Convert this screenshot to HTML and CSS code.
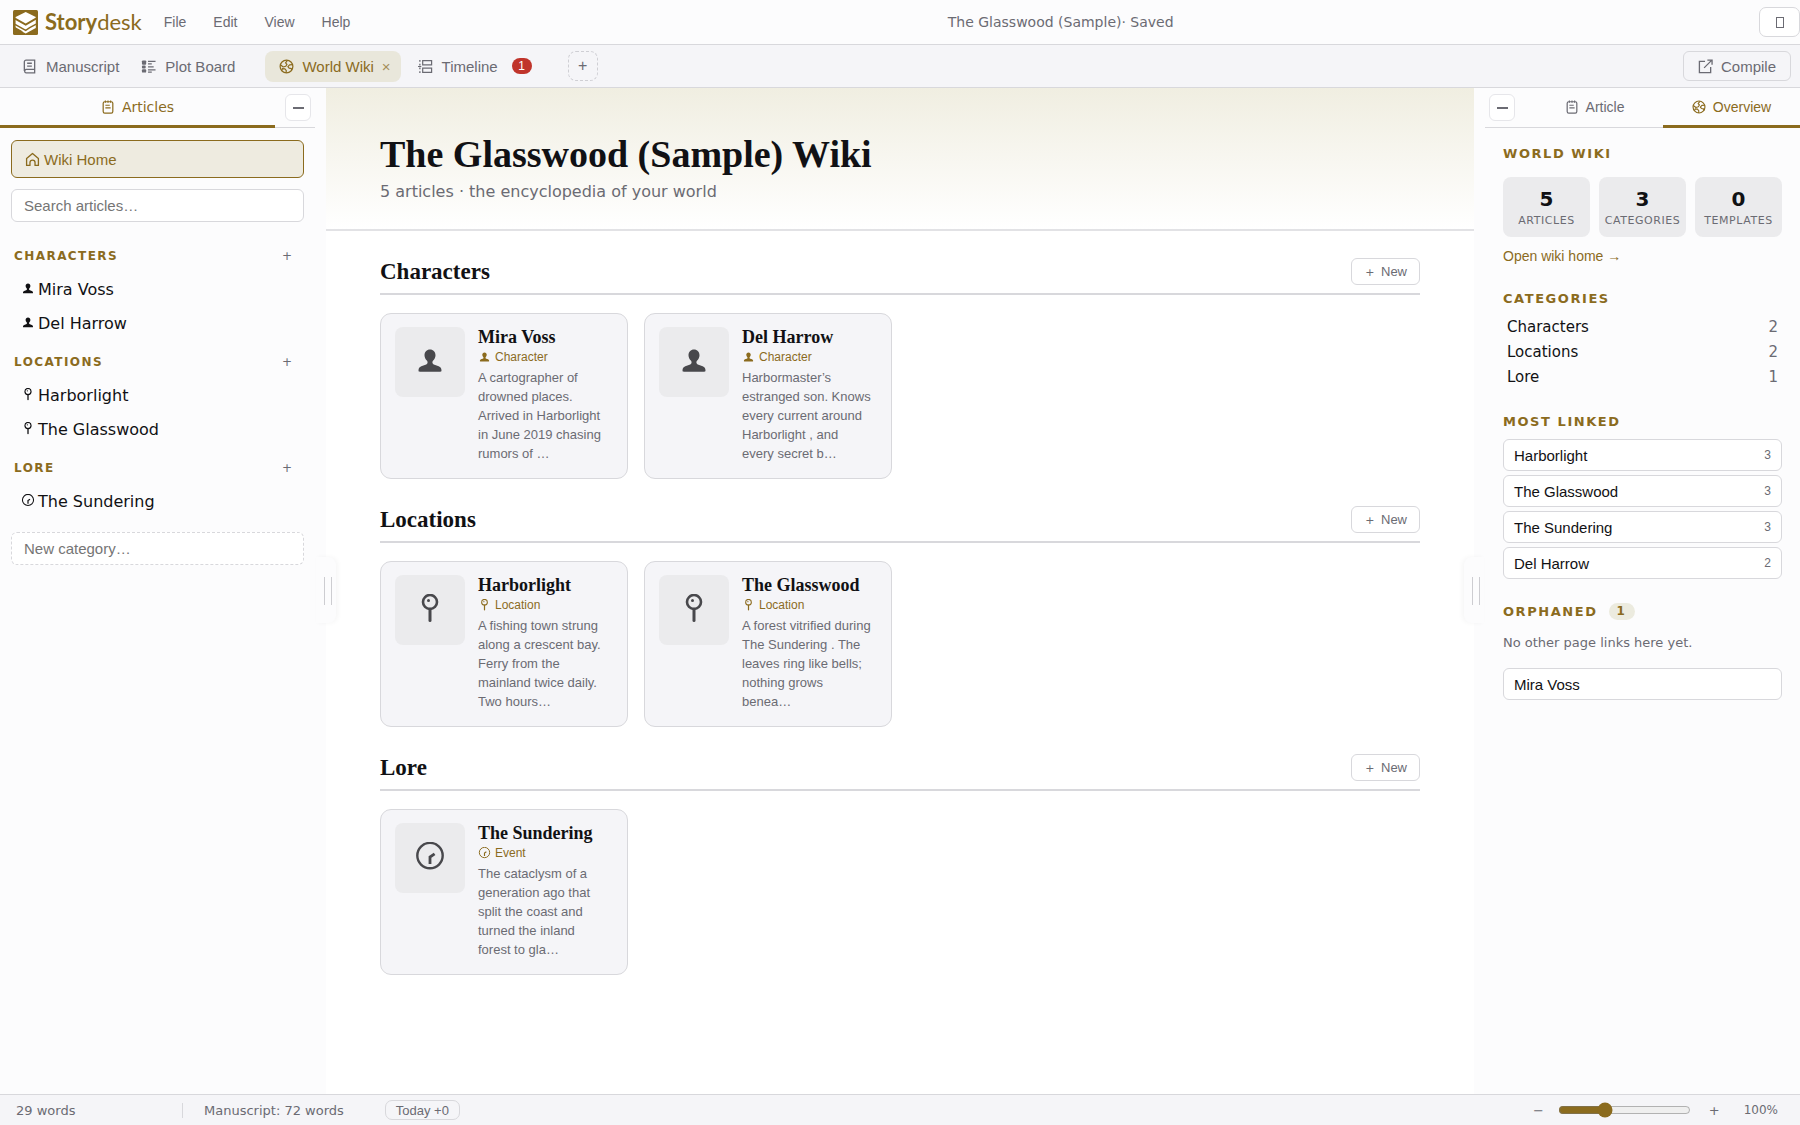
FILE: index.html
```html
<!DOCTYPE html>
<html lang="en">
<head>
    <meta charset="UTF-8">
    <meta name="viewport" content="width=device-width, initial-scale=1.0">
    <title>Storydesk - World Wiki</title>
    <link rel="stylesheet" href="styles.css">
</head>
<body>
    <!-- Shared icons -->
    <svg class="sprite" aria-hidden="true">
        <symbol id="icon-person" viewBox="0 0 32 32">
            <path fill="currentColor" d="M16 3.500c3.300 0 5.500 2.600 5.500 5.800 0 2.300-1 3.900-2.300 5.200-.7.700-.9 1.600-.7 2.500.2.900.9 1.400 2 1.800l4.200 1.500c1.800.7 2.800 2.100 2.800 4.200 0 .8-.5 1.200-1.200 1.200H5.700c-.7 0-1.200-.4-1.200-1.200 0-2.100 1-3.500 2.800-4.200l4.200-1.500c1.100-.4 1.800-.9 2-1.800.2-.9 0-1.800-.7-2.500-1.300-1.300-2.300-2.900-2.300-5.200 0-3.200 2.200-5.800 5.500-5.800z"/>
        </symbol>
        <symbol id="icon-pin" viewBox="0 0 32 32">
            <circle cx="16" cy="8" r="7" fill="none" stroke="currentColor" stroke-width="2.600"/>
            <circle cx="14.500" cy="6.500" r="1.500" fill="currentColor"/>
            <path d="M16 15v11.500" fill="none" stroke="currentColor" stroke-width="3" stroke-linecap="round"/>
        </symbol>
        <symbol id="icon-event" viewBox="0 0 32 32">
            <circle cx="16" cy="13.600" r="12.700" fill="none" stroke="currentColor" stroke-width="2.400"/>
            <path d="M16 22v-7l4.600-3.200" fill="none" stroke="currentColor" stroke-width="2.800"/>
        </symbol>
        <symbol id="icon-book" viewBox="0 0 16 16">
            <path d="M2.500 12.800V3a1.800 1.800 0 0 1 1.800-1.800h9.200v13.600h-9.200a1.900 1.900 0 0 1 0-3.700h9.200M5.500 4.500h5M5.500 7.500h5" fill="none" stroke="currentColor" stroke-width="1.400"/>
        </symbol>
        <symbol id="icon-board" viewBox="0 0 16 16">
            <rect x="1" y="1.500" width="4.500" height="4.500" rx="1" fill="currentColor"/>
            <rect x="1" y="7" width="4" height="3" rx="1" fill="currentColor"/>
            <rect x="1" y="11" width="4.500" height="3.500" rx="1" fill="currentColor"/>
            <path d="M7.500 2.500h8M7.500 5.300h4M7.500 8.500h6M7.500 11.500h8M7.500 14h4" fill="none" stroke="currentColor" stroke-width="1.300"/>
        </symbol>
        <symbol id="icon-globe" viewBox="0 0 16 16">
            <g fill="none" stroke="currentColor" stroke-width="1.300" stroke-linejoin="round">
                <circle cx="8" cy="8" r="6.800"/>
                <path d="M1.500 6.200 4.500 8.500l2.700-.8 1.300-2-1.500-1.500L9 1.500M14.500 6l-3.200.2-1.800 2 1.300 1.500 2.400.5.500 2M2.800 12.500l.8-2.300 2.700.3 1.500 1.800-.3 2.500"/>
            </g>
        </symbol>
        <symbol id="icon-timeline" viewBox="0 0 16 16">
            <path d="M2 1v14" fill="none" stroke="currentColor" stroke-width="1.400" stroke-dasharray="2 2"/>
            <path d="M0 8h3.500M5 1.800h9.500v4.500H5zM5 9.700h9.500v4.500H5z" fill="none" stroke="currentColor" stroke-width="1.300"/>
        </symbol>
        <symbol id="icon-note" viewBox="0 0 16 16">
            <rect x="2.500" y="2" width="11" height="13" rx="1.800" fill="none" stroke="currentColor" stroke-width="1.400"/>
            <path d="M5 .6v2.400M8 .6v2.400M11 .6v2.400M5 6h5M5 9h6" fill="none" stroke="currentColor" stroke-width="1.300"/>
        </symbol>
        <symbol id="icon-home" viewBox="0 0 16 16">
            <path d="M1.700 7 8 1.600 14.300 7v7.300h-3.600v-3a2.700 2.700 0 0 0-5.400 0v3H1.700z" fill="none" stroke="currentColor" stroke-width="1.400" stroke-linejoin="round"/>
        </symbol>
        <symbol id="icon-export" viewBox="0 0 16 16">
            <path d="M7.500 2.500h-6v12h12v-6M6.500 9.500l8-8M10 1.200h5V6" fill="none" stroke="currentColor" stroke-width="1.400"/>
        </symbol>
    </svg>

    <header class="titlebar">
        <div class="brand">
            <svg class="brand-logo" viewBox="0 0 25 25" aria-hidden="true">
                <rect width="25" height="25" rx="1.500" fill="#8b6b1e"/>
                <path d="M12.700 2 22.800 7v11l-10.100 5.500L2.600 18V7z" fill="#fff"/>
                <path d="M2 8.600l10.700 6L23.400 8.400" fill="none" stroke="#8b6b1e" stroke-width="1.800"/>
                <path d="M2 14.300l10.700 6 4-2.600 6.500-3.500" fill="none" stroke="#8b6b1e" stroke-width="1.500"/>
                <path d="M2 17l8 4.500L7.500 22 2 19z" fill="#8b6b1e"/>
            </svg>
            <span class="brand-name"><b>Story</b>desk</span>
        </div>
        <nav class="menu">
            <button>File</button>
            <button>Edit</button>
            <button>View</button>
            <button>Help</button>
        </nav>
        <div class="doc-title">The Glasswood (Sample)<span>· Saved</span></div>
        <button class="theme-btn" aria-label="Theme">
            <svg width="10" height="13" viewBox="0 0 10 13"><rect x="1.500" y="1.500" width="7" height="10" fill="none" stroke="currentColor"/></svg>
        </button>
    </header>

    <div class="tabbar">
        <button class="tab"><svg class="icon"><use href="#icon-book"/></svg>Manuscript</button>
        <button class="tab tab-plot"><svg class="icon"><use href="#icon-board"/></svg>Plot Board</button>
        <button class="tab active"><svg class="icon"><use href="#icon-globe"/></svg>World Wiki<span class="close">×</span></button>
        <button class="tab"><svg class="icon"><use href="#icon-timeline"/></svg>Timeline<span class="alert">1</span></button>
        <button class="add-tab" aria-label="Add tab">+</button>
        <button class="compile"><svg class="icon"><use href="#icon-export"/></svg>Compile</button>
    </div>

    <div class="workspace">
        <aside class="sidebar left">
            <div class="panel-tabs">
                <button class="panel-tab articles active"><svg class="icon"><use href="#icon-note"/></svg>Articles</button>
                <button class="collapse" aria-label="Collapse panel"></button>
            </div>
            <div class="article-list">
                <button class="wiki-home"><svg class="icon"><use href="#icon-home"/></svg>Wiki Home</button>
                <input type="text" class="search" placeholder="Search articles…" aria-label="Search articles">

                <div class="group">
                    <div class="group-head"><h3>Characters</h3><button aria-label="Add character">+</button></div>
                    <a href="#"><svg><use href="#icon-person"/></svg>Mira Voss</a>
                    <a href="#"><svg><use href="#icon-person"/></svg>Del Harrow</a>
                </div>
                <div class="group">
                    <div class="group-head"><h3>Locations</h3><button aria-label="Add location">+</button></div>
                    <a href="#"><svg><use href="#icon-pin"/></svg>Harborlight</a>
                    <a href="#"><svg><use href="#icon-pin"/></svg>The Glasswood</a>
                </div>
                <div class="group">
                    <div class="group-head"><h3>Lore</h3><button aria-label="Add lore">+</button></div>
                    <a href="#"><svg><use href="#icon-event"/></svg>The Sundering</a>
                </div>

                <input type="text" class="new-category" placeholder="New category…" aria-label="New category">
            </div>
            <div class="handle"></div>
        </aside>

        <main>
            <div class="hero">
                <h1>The Glasswood (Sample) Wiki</h1>
                <p>5 articles · the encyclopedia of your world</p>
            </div>

            <div class="sections">
                <section>
                    <div class="section-head"><h2>Characters</h2><button><span>+</span> New</button></div>
                    <div class="cards">
                        <article class="card">
                            <div class="thumb"><svg><use href="#icon-person"/></svg></div>
                            <div class="card-body">
                                <h4>Mira Voss</h4>
                                <div class="kind"><svg><use href="#icon-person"/></svg>Character</div>
                                <p>A cartographer of drowned places. Arrived in Harborlight in June 2019 chasing rumors of …</p>
                            </div>
                        </article>
                        <article class="card">
                            <div class="thumb"><svg><use href="#icon-person"/></svg></div>
                            <div class="card-body">
                                <h4>Del Harrow</h4>
                                <div class="kind"><svg><use href="#icon-person"/></svg>Character</div>
                                <p>Harbormaster’s estranged son. Knows every current around Harborlight , and<br>every secret b…</p>
                            </div>
                        </article>
                    </div>
                </section>

                <section>
                    <div class="section-head"><h2>Locations</h2><button><span>+</span> New</button></div>
                    <div class="cards">
                        <article class="card">
                            <div class="thumb"><svg><use href="#icon-pin"/></svg></div>
                            <div class="card-body">
                                <h4>Harborlight</h4>
                                <div class="kind"><svg><use href="#icon-pin"/></svg>Location</div>
                                <p>A fishing town strung along a crescent bay. Ferry from the<br>mainland twice daily. Two hours…</p>
                            </div>
                        </article>
                        <article class="card">
                            <div class="thumb"><svg><use href="#icon-pin"/></svg></div>
                            <div class="card-body">
                                <h4>The Glasswood</h4>
                                <div class="kind"><svg><use href="#icon-pin"/></svg>Location</div>
                                <p>A forest vitrified during The Sundering . The leaves ring like bells; nothing grows<br>benea…</p>
                            </div>
                        </article>
                    </div>
                </section>

                <section>
                    <div class="section-head"><h2>Lore</h2><button><span>+</span> New</button></div>
                    <div class="cards">
                        <article class="card">
                            <div class="thumb"><svg><use href="#icon-event"/></svg></div>
                            <div class="card-body">
                                <h4>The Sundering</h4>
                                <div class="kind"><svg><use href="#icon-event"/></svg>Event</div>
                                <p>The cataclysm of a generation ago that split the coast and turned the inland<br>forest to gla…</p>
                            </div>
                        </article>
                    </div>
                </section>
            </div>
        </main>

        <aside class="sidebar right">
            <div class="panel-tabs">
                <button class="collapse" aria-label="Collapse panel"></button>
                <button class="panel-tab"><svg class="icon"><use href="#icon-note"/></svg>Article</button>
                <button class="panel-tab active"><svg class="icon"><use href="#icon-globe"/></svg>Overview</button>
            </div>
            <div class="overview">
                <h3>World Wiki</h3>
                <div class="stats">
                    <div class="stat"><strong>5</strong><span>Articles</span></div>
                    <div class="stat"><strong>3</strong><span>Categories</span></div>
                    <div class="stat"><strong>0</strong><span>Templates</span></div>
                </div>
                <a class="home-link" href="#">Open wiki home →</a>

                <h3>Categories</h3>
                <ul class="category-counts">
                    <li>Characters<span>2</span></li>
                    <li>Locations<span>2</span></li>
                    <li>Lore<span>1</span></li>
                </ul>

                <h3>Most linked</h3>
                <div class="links">
                    <button>Harborlight<span>3</span></button>
                    <button>The Glasswood<span>3</span></button>
                    <button>The Sundering<span>3</span></button>
                    <button>Del Harrow<span>2</span></button>
                </div>

                <h3>Orphaned<span class="count">1</span></h3>
                <p class="hint">No other page links here yet.</p>
                <div class="links">
                    <button>Mira Voss</button>
                </div>
            </div>
            <div class="handle"></div>
        </aside>
    </div>

    <footer class="statusbar">
        <span class="words">29 words</span>
        <span class="total">Manuscript: 72 words</span>
        <button class="today">Today +0</button>
        <div class="zoom">
            <button aria-label="Zoom out">−</button>
            <input type="range" min="50" max="200" value="100" aria-label="Zoom">
            <button aria-label="Zoom in">+</button>
            <span>100%</span>
        </div>
    </footer>
</body>
</html>
```
FILE: styles.css
```css
:root {
    --accent: #8b6b1e;
    --text: #111114;
    --muted: #6b6b73;
    --border: #d8d8dc;
    --panel: #fcfcfd;
    --surface: #f5f5f8;
    --sans: "Liberation Sans", Arial, sans-serif;
    --ui: "DejaVu Sans", Verdana, sans-serif;
    --serif: "Liberation Serif", "Times New Roman", serif;
}

* {
    box-sizing: border-box;
}

body {
    margin: 0;
    height: 100vh;
    display: flex;
    flex-direction: column;
    overflow: hidden;
    background: #fff;
    color: var(--text);
    font-family: var(--ui);
    font-size: 15px;
}

h1, h2, h3, h4, p, ul {
    margin: 0;
    padding: 0;
}

button, input {
    font-family: var(--sans);
    color: inherit;
}

button {
    padding: 0;
    border: none;
    background: none;
    cursor: pointer;
}

a {
    text-decoration: none;
}

.sprite {
    display: none;
}

.icon {
    width: 15px;
    height: 15px;
    flex: none;
}

/* Title bar */
.titlebar {
    display: flex;
    align-items: center;
    height: 45px;
    flex: none;
    padding-left: 13px;
    background: var(--panel);
    border-bottom: 1px solid var(--border);
    color: var(--muted);
}

.brand {
    display: flex;
    align-items: center;
    gap: 7px;
    color: var(--accent);
}

.brand-logo {
    width: 25px;
    height: 25px;
}

.brand-name {
    font-family: Lato, "Open Sans", sans-serif;
    font-size: 22px;
    line-height: 24px;
}

.menu {
    display: flex;
    gap: 27px;
    margin-left: 22px;
}

.menu button {
    font-size: 14px;
}

.doc-title {
    flex: 1;
    padding-left: 12px;
    font-size: 14px;
    text-align: center;
}

.theme-btn {
    display: flex;
    align-items: center;
    justify-content: center;
    width: 41px;
    height: 30px;
    background: #fff;
    border: 1px solid var(--border);
    border-radius: 7px;
}

/* Document tabs */
.tabbar {
    display: flex;
    align-items: center;
    height: 43px;
    flex: none;
    padding: 0 9px 0 8px;
    background: var(--surface);
    border-bottom: 1px solid var(--border);
    color: var(--muted);
}

.tab {
    display: flex;
    align-items: center;
    gap: 9px;
    height: 31px;
    padding: 0 10px 0 14px;
    border-radius: 8px;
    font-size: 15px;
}

.tab-plot {
    margin-right: 20px;
    padding-left: 12px;
}

.tab.active {
    gap: 8px;
    margin-right: 3px;
    background: #e9e7db;
    color: var(--accent);
}

.close {
    font-size: 15px;
    opacity: 0.7;
}

.alert {
    width: 20px;
    height: 16px;
    margin-left: 5px;
    border-radius: 8px;
    background: #c0342b;
    color: #fff;
    font-size: 12px;
    line-height: 16px;
}

.add-tab {
    width: 30px;
    height: 30px;
    margin-left: 26px;
    border: 1px dashed #cfcfd4;
    border-radius: 8px;
    font-size: 16px;
}

.compile {
    display: flex;
    align-items: center;
    gap: 8px;
    height: 30px;
    margin-left: auto;
    padding: 0 14px;
    border: 1px solid var(--border);
    border-radius: 6px;
    font-size: 15px;
}

/* Workspace */
.workspace {
    flex: 1;
    display: flex;
    min-height: 0;
}

.sidebar {
    position: relative;
    flex: none;
    width: 326px;
    background: var(--panel);
}

.left {
    padding-right: 11px;
}

.right {
    padding-left: 11px;
}

.handle {
    position: absolute;
    top: 50%;
    width: 20px;
    height: 66px;
    margin-top: -34px;
    background: var(--panel);
}

.left .handle {
    right: -10px;
    border-radius: 0 8px 8px 0;
    box-shadow: 2px 0 5px rgba(0, 0, 0, 0.04);
}

.right .handle {
    left: -10px;
    border-radius: 8px 0 0 8px;
    box-shadow: -2px 0 5px rgba(0, 0, 0, 0.04);
}

.handle::after {
    content: "";
    position: absolute;
    top: 20px;
    left: 8px;
    width: 6px;
    height: 28px;
    border: solid #cdcdd1;
    border-width: 0 1px;
}

.panel-tabs {
    display: flex;
    align-items: stretch;
    height: 40px;
    border-bottom: 1px solid var(--border);
}

.panel-tab {
    display: flex;
    flex: 1;
    align-items: center;
    justify-content: center;
    gap: 7px;
    margin-bottom: -1px;
    border-bottom: 3px solid transparent;
    color: var(--muted);
    font-size: 14px;
}

.panel-tab.active {
    border-bottom-color: var(--accent);
    color: var(--accent);
}

.articles {
    font-family: var(--ui);
}

.panel-tab .icon {
    width: 14px;
    height: 14px;
}

.collapse {
    display: flex;
    align-items: center;
    justify-content: center;
    align-self: center;
    width: 26px;
    height: 27px;
    background: #fff;
    border: 1px solid #e6e6ea;
    border-radius: 6px;
}

.collapse::before {
    content: "";
    width: 11px;
    height: 2px;
    background: var(--muted);
}

.left .collapse {
    margin: 0 4px 0 10px;
}

.right .collapse {
    margin: 0 11px 0 4px;
}

/* Article list */
.article-list {
    display: flex;
    flex-direction: column;
    padding: 12px 11px;
}

.wiki-home {
    display: flex;
    align-items: center;
    gap: 4px;
    height: 38px;
    padding: 0 13px;
    background: #eeebe0;
    border: 1px solid var(--accent);
    border-radius: 6px;
    color: var(--accent);
    font-size: 15px;
}

.search,
.new-category {
    height: 33px;
    padding: 0 12px;
    background: #fff;
    border: 1px solid var(--border);
    border-radius: 6px;
    font-size: 15px;
}

.search {
    margin: 11px 0 16px;
}

.new-category {
    margin-top: 10px;
    border-style: dashed;
}

.search::placeholder,
.new-category::placeholder {
    color: #757575;
}

.group {
    margin-bottom: 4px;
}

.group-head {
    display: flex;
    align-items: center;
    justify-content: space-between;
    height: 34px;
    padding: 2px 12px 0 3px;
}

.group-head h3 {
    color: var(--accent);
    font-size: 12px;
    letter-spacing: 0.12em;
    text-transform: uppercase;
}

.group-head button {
    color: var(--muted);
    font-family: var(--ui);
    font-size: 12px;
}

.group a {
    display: flex;
    align-items: center;
    gap: 3px;
    height: 34px;
    padding-left: 10px;
    color: var(--text);
    font-size: 16px;
}

.group svg {
    width: 14px;
    height: 14px;
}

/* Wiki home page */
main {
    flex: 1;
    min-width: 0;
}

.hero {
    height: 143px;
    padding: 44px 54px 0;
    background: linear-gradient(#f0eee1, #fff);
    border-bottom: 2px solid #e2e2e5;
}

h1 {
    font-family: var(--serif);
    font-size: 38px;
    line-height: 44px;
}

.hero p {
    margin-top: 6px;
    color: var(--muted);
    font-size: 16px;
    line-height: 20px;
}

.sections {
    padding: 23px 54px 0;
}

section {
    margin-bottom: 23px;
}

.section-head {
    display: flex;
    align-items: center;
    justify-content: space-between;
    height: 41px;
    margin-bottom: 18px;
    padding-bottom: 4px;
    border-bottom: 2px solid var(--border);
}

h2 {
    font-family: var(--serif);
    font-size: 23px;
    line-height: 28px;
}

.section-head button {
    height: 27px;
    padding: 0 12px 0 13px;
    background: #fff;
    border: 1px solid var(--border);
    border-radius: 6px;
    color: var(--muted);
    font-size: 13px;
}

.section-head span {
    margin-right: 3px;
    font-family: var(--ui);
    font-size: 11px;
}

.cards {
    display: grid;
    grid-template-columns: repeat(auto-fill, minmax(240px, 1fr));
    gap: 16px;
}

.card {
    display: flex;
    gap: 13px;
    min-height: 166px;
    padding: 13px 14px;
    background: var(--surface);
    border: 1px solid var(--border);
    border-radius: 11px;
}

.thumb {
    display: flex;
    align-items: center;
    justify-content: center;
    flex: none;
    width: 70px;
    height: 70px;
    background: #ebebed;
    border-radius: 8px;
    color: #48484c;
}

.thumb svg {
    width: 32px;
    height: 32px;
}

.card-body {
    flex: 1;
    min-width: 0;
    font-family: var(--sans);
}

h4 {
    font-family: var(--serif);
    font-size: 18px;
    line-height: 20px;
}

.kind {
    display: flex;
    align-items: center;
    gap: 4px;
    height: 20px;
    color: var(--accent);
    font-size: 12px;
}

.kind svg {
    width: 13px;
    height: 13px;
}

.card p {
    margin-top: 1px;
    color: var(--muted);
    font-size: 13px;
    line-height: 19px;
}

/* Overview panel */
.overview {
    padding: 15px 18px;
}

.overview h3 {
    display: flex;
    align-items: center;
    height: 20px;
    color: var(--accent);
    font-size: 13px;
    letter-spacing: 0.12em;
    text-transform: uppercase;
}

.stats {
    display: grid;
    grid-template-columns: repeat(3, 1fr);
    gap: 9px;
    margin-top: 14px;
}

.stat {
    display: flex;
    flex-direction: column;
    align-items: center;
    height: 60px;
    padding-top: 9px;
    background: #ebebed;
    border-radius: 8px;
}

.stat strong {
    font-size: 20px;
    line-height: 26px;
}

.stat span {
    color: var(--muted);
    font-size: 11px;
    letter-spacing: 0.05em;
    line-height: 18px;
    text-transform: uppercase;
}

.home-link {
    display: block;
    margin: 9px 0 22px;
    color: var(--accent);
    font-family: var(--sans);
    font-size: 14px;
    line-height: 20px;
}

.category-counts {
    margin: 7px 0 21px;
    padding: 0 4px;
    list-style: none;
    font-size: 15px;
}

.category-counts li {
    display: flex;
    justify-content: space-between;
    line-height: 25px;
}

.category-counts span {
    color: var(--muted);
}

.links {
    display: flex;
    flex-direction: column;
    gap: 4px;
    margin: 8px 0 22px;
}

.links button {
    display: flex;
    align-items: center;
    justify-content: space-between;
    height: 32px;
    padding: 0 10px;
    background: #fff;
    border: 1px solid var(--border);
    border-radius: 6px;
    font-size: 15px;
}

.links span {
    color: var(--muted);
    font-size: 12px;
}

.count {
    width: 26px;
    margin-left: 11px;
    background: #ecebdf;
    border-radius: 9px;
    font-size: 12px;
    line-height: 17px;
    text-align: center;
}

.hint {
    margin: 12px 0 15px;
    color: var(--muted);
    font-size: 13px;
    line-height: 20px;
}

/* Status bar */
.statusbar {
    display: flex;
    align-items: center;
    height: 31px;
    flex: none;
    padding: 0 22px 0 16px;
    background: var(--surface);
    border-top: 1px solid var(--border);
    color: var(--muted);
    font-size: 13px;
}

.words {
    width: 167px;
    border-right: 1px solid var(--border);
}

.total {
    margin-left: 21px;
}

.today {
    height: 20px;
    margin-left: 41px;
    padding: 0 10px;
    border: 1px solid var(--border);
    border-radius: 7px;
    font-size: 13px;
}

.zoom {
    display: flex;
    align-items: center;
    margin-left: auto;
    font-size: 12px;
}

.zoom button {
    font-family: var(--ui);
    font-size: 13px;
}

.zoom input {
    width: 133px;
    margin: 0 18px 0 14px;
    accent-color: var(--accent);
}

.zoom span {
    margin-left: 24px;
}
```
